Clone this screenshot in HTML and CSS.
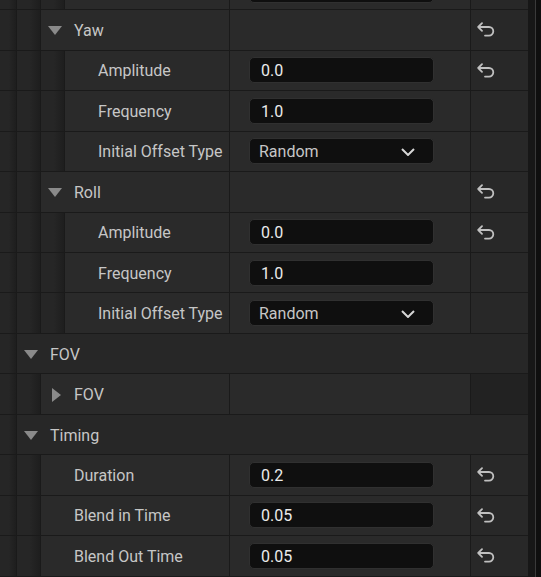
FILE: index.html
```html
<!DOCTYPE html>
<html>
<head>
<meta charset="utf-8">
<link rel="stylesheet" href="styles.css">
</head>
<body>
<svg width="0" height="0" class="defs">
  <defs>
    <symbol id="reset" viewBox="0 0 20 15"><path d="M6 1.2 L2.2 5 L6 8.8 M2.2 5 H13 A4.3 4.3 0 0 1 13 13.6 H9" fill="none" stroke="currentColor" stroke-width="1.8" stroke-linecap="round" stroke-linejoin="round"/></symbol>
    <symbol id="down" viewBox="0 0 14 9"><polygon points="0,0 14,0 7,9" fill="currentColor"/></symbol>
    <symbol id="right" viewBox="0 0 9 14"><polygon points="0,0 9,7 0,14" fill="currentColor"/></symbol>
    <symbol id="chev" viewBox="0 0 14 8"><path d="M1 1 L7 7 L13 1" fill="none" stroke="currentColor" stroke-width="2"/></symbol>
  </defs>
</svg>
<div class="panel">
  <div class="list">
    <div class="row partial">
      <div class="strip"></div><div class="strip w23"></div><div class="strip w23"></div>
      <div class="name"></div>
      <div class="value"><div class="box"></div></div>
      <div class="reset"></div>
    </div>

    <div class="row">
      <div class="strip"></div><div class="strip w23"></div>
      <div class="name"><span class="twisty"><svg class="tri-down"><use href="#down"/></svg></span>Yaw</div>
      <div class="value"></div>
      <div class="reset"><svg class="reset-icon"><use href="#reset"/></svg></div>
    </div>
    <div class="row">
      <div class="strip"></div><div class="strip w23"></div><div class="strip w23"></div>
      <div class="name plain">Amplitude</div>
      <div class="value"><div class="box">0.0</div></div>
      <div class="reset"><svg class="reset-icon"><use href="#reset"/></svg></div>
    </div>
    <div class="row">
      <div class="strip"></div><div class="strip w23"></div><div class="strip w23"></div>
      <div class="name plain">Frequency</div>
      <div class="value"><div class="box">1.0</div></div>
      <div class="reset"></div>
    </div>
    <div class="row">
      <div class="strip"></div><div class="strip w23"></div><div class="strip w23"></div>
      <div class="name plain">Initial Offset Type</div>
      <div class="value"><div class="box combo"><span>Random</span><svg class="chev"><use href="#chev"/></svg></div></div>
      <div class="reset"></div>
    </div>

    <div class="row">
      <div class="strip"></div><div class="strip w23"></div>
      <div class="name"><span class="twisty"><svg class="tri-down"><use href="#down"/></svg></span>Roll</div>
      <div class="value"></div>
      <div class="reset"><svg class="reset-icon"><use href="#reset"/></svg></div>
    </div>
    <div class="row">
      <div class="strip"></div><div class="strip w23"></div><div class="strip w23"></div>
      <div class="name plain">Amplitude</div>
      <div class="value"><div class="box">0.0</div></div>
      <div class="reset"><svg class="reset-icon"><use href="#reset"/></svg></div>
    </div>
    <div class="row">
      <div class="strip"></div><div class="strip w23"></div><div class="strip w23"></div>
      <div class="name plain">Frequency</div>
      <div class="value"><div class="box">1.0</div></div>
      <div class="reset"></div>
    </div>
    <div class="row">
      <div class="strip"></div><div class="strip w23"></div><div class="strip w23"></div>
      <div class="name plain">Initial Offset Type</div>
      <div class="value"><div class="box combo"><span>Random</span><svg class="chev"><use href="#chev"/></svg></div></div>
      <div class="reset"></div>
    </div>

    <div class="row">
      <div class="strip"></div>
      <div class="category"><span class="twisty"><svg class="tri-down"><use href="#down"/></svg></span>FOV</div>
    </div>
    <div class="row">
      <div class="strip"></div><div class="strip w23"></div>
      <div class="name"><span class="twisty right"><svg class="tri-right"><use href="#right"/></svg></span>FOV</div>
      <div class="value"></div>
      <div class="reset dark"></div>
    </div>

    <div class="row">
      <div class="strip"></div>
      <div class="category"><span class="twisty"><svg class="tri-down"><use href="#down"/></svg></span>Timing</div>
    </div>
    <div class="row">
      <div class="strip"></div><div class="strip w23"></div>
      <div class="name plain">Duration</div>
      <div class="value"><div class="box">0.2</div></div>
      <div class="reset"><svg class="reset-icon"><use href="#reset"/></svg></div>
    </div>
    <div class="row">
      <div class="strip"></div><div class="strip w23"></div>
      <div class="name plain">Blend in Time</div>
      <div class="value"><div class="box">0.05</div></div>
      <div class="reset"><svg class="reset-icon"><use href="#reset"/></svg></div>
    </div>
    <div class="row">
      <div class="strip"></div><div class="strip w23"></div>
      <div class="name plain">Blend Out Time</div>
      <div class="value"><div class="box">0.05</div></div>
      <div class="reset"><svg class="reset-icon"><use href="#reset"/></svg></div>
    </div>
  </div>
  <div class="scroll">
    <div class="track"></div>
    <div class="edge"></div>
    <div class="outer"></div>
  </div>
</div>
</body>
</html>
```

FILE: styles.css
```css
html, body {
  margin: 0;
  padding: 0;
  background: #151515;
  overflow: hidden;
}
body {
  font-family: Roboto, "Liberation Sans", sans-serif;
  font-size: 16px;
  color: #c6c6c6;
}
.defs {
  position: absolute;
  width: 0;
  height: 0;
}
.panel {
  display: flex;
  height: 577px;
  overflow: hidden;
}
.list {
  width: 528px;
  background: #1a1a1a;
  display: flex;
  flex-direction: column;
}
.row {
  display: flex;
  gap: 1px;
  height: 39.46px;
  flex: none;
  margin-top: 1px;
}
.row.partial {
  margin-top: -30.2px;
}
.strip {
  width: 16px;
  flex: none;
  background: linear-gradient(to right, #262626 55%, #1e1e1e);
}
.strip.w23 {
  width: 23px;
}
.name {
  flex: 1;
  min-width: 0;
  background: #2a2a2a;
  display: flex;
  align-items: center;
  padding-left: 7px;
  padding-top: 1px;
  box-sizing: border-box;
  white-space: nowrap;
}
.name.plain {
  padding-left: 33px;
}
.twisty {
  width: 26px;
  flex: none;
  display: flex;
  align-items: center;
}
.twisty.right {
  width: 22px;
  padding-left: 4px;
}
.tri-down {
  width: 14px;
  height: 9px;
  color: #8a8a8a;
}
.tri-right {
  width: 9px;
  height: 14px;
  color: #8a8a8a;
}
.value {
  width: 240px;
  flex: none;
  background: #2a2a2a;
  display: flex;
  align-items: center;
  padding-left: 19px;
  box-sizing: border-box;
}
.box {
  width: 185px;
  height: 26px;
  box-sizing: border-box;
  background: #0f0f0f;
  border: 1px solid #303030;
  border-radius: 5px;
  display: flex;
  align-items: center;
  padding-left: 11px;
  padding-top: 1px;
  color: #ebebeb;
}
.box.combo {
  justify-content: space-between;
  padding-left: 9px;
  padding-right: 18px;
  color: #c6c6c6;
}
.chev {
  width: 14px;
  height: 8px;
  color: #d6d6d6;
}
.reset {
  width: 57px;
  flex: none;
  background: #282828;
  display: flex;
  align-items: center;
  padding-left: 5px;
  box-sizing: border-box;
}
.reset.dark {
  background: #222222;
}
.reset-icon {
  width: 20px;
  height: 15px;
  color: #c0c0c0;
}
.category {
  flex: 1;
  background: #272727;
  display: flex;
  align-items: center;
  padding-left: 7px;
  padding-top: 1px;
  box-sizing: border-box;
}
.scroll {
  display: flex;
  flex: 1;
}
.track {
  width: 7px;
  background: #171717;
}
.edge {
  width: 1px;
  background: #3a3a3a;
}
.outer {
  flex: 1;
  background: #0f0f0f;
}
```
